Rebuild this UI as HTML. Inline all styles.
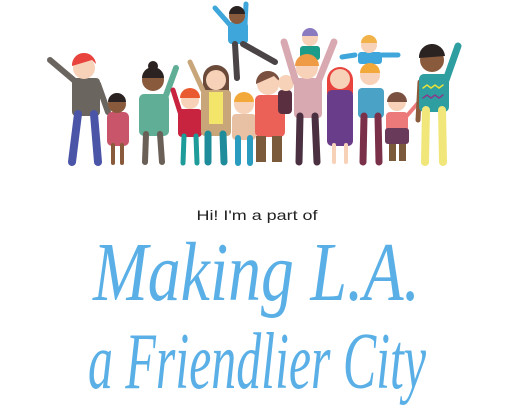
<!DOCTYPE html>
<html><head><meta charset="utf-8"><style>
html,body{margin:0;padding:0;background:#fff;width:512px;height:410px;overflow:hidden}
svg{display:block}
</style></head><body>
<svg width="512" height="410" viewBox="0 0 512 410" xmlns="http://www.w3.org/2000/svg">
<g stroke-linecap="round">
<line x1="230" y1="25" x2="215" y2="8" stroke="#3ea6db" stroke-width="5"/>
<line x1="245" y1="25" x2="246" y2="4" stroke="#3ea6db" stroke-width="5"/>
<rect x="228" y="22" width="20" height="22" rx="4" fill="#3ea6db"/>
<line x1="235" y1="44" x2="237" y2="78" stroke="#4a4446" stroke-width="6"/>
<line x1="243" y1="44" x2="275" y2="62" stroke="#4a4446" stroke-width="6"/>
<circle cx="237" cy="16" r="8" fill="#8a5a3c"/><path d="M229 14a8 8 0 0 1 16 0z" fill="#2b2222"/>
<line x1="76" y1="82" x2="50" y2="60" stroke="#6b6560" stroke-width="6"/>
<line x1="98" y1="84" x2="108" y2="112" stroke="#6b6560" stroke-width="6"/>
<rect x="72" y="78" width="28" height="38" rx="4" fill="#6b6560"/>
<line x1="78" y1="114" x2="72" y2="162" stroke="#4a55a8" stroke-width="8"/>
<line x1="94" y1="114" x2="98" y2="162" stroke="#4a55a8" stroke-width="8"/>
<circle cx="84" cy="68" r="11" fill="#f7d2b8"/><path d="M72 66a12 12 0 0 1 24 -2l-4 -4z" fill="#e8433c"/>
<rect x="107" y="112" width="22" height="34" rx="5" fill="#c9556a"/>
<line x1="113" y1="145" x2="113" y2="163" stroke="#8a5a3c" stroke-width="4"/>
<line x1="122" y1="145" x2="122" y2="163" stroke="#8a5a3c" stroke-width="4"/>
<circle cx="117" cy="104" r="9" fill="#8a5a3c"/><path d="M108 102a9 9 0 0 1 18 0z" fill="#2b2222"/>
<line x1="165" y1="98" x2="176" y2="68" stroke="#5fae95" stroke-width="6"/>
<rect x="139" y="94" width="30" height="42" rx="5" fill="#5fae95"/>
<line x1="146" y1="134" x2="145" y2="162" stroke="#6b6058" stroke-width="6"/>
<line x1="160" y1="134" x2="162" y2="162" stroke="#6b6058" stroke-width="6"/>
<circle cx="153" cy="80" r="11" fill="#8a5a3c"/><path d="M142 78a11 11 0 0 1 22 0z" fill="#2b2222"/><circle cx="153" cy="66" r="5" fill="#2b2222"/>
<line x1="180" y1="112" x2="173" y2="90" stroke="#c8233f" stroke-width="5"/>
<rect x="178" y="109" width="24" height="28" rx="4" fill="#c8233f"/>
<line x1="184" y1="136" x2="183" y2="163" stroke="#1e9c9a" stroke-width="5"/>
<line x1="196" y1="136" x2="197" y2="163" stroke="#1e9c9a" stroke-width="5"/>
<circle cx="190" cy="100" r="9" fill="#f7d2b8"/><path d="M180 98a10 10 0 0 1 20 0z" fill="#ea5a30"/>
<path d="M203 78a13 13 0 0 1 26 0v30h-26z" fill="#6b4a3a"/>
<line x1="205" y1="95" x2="190" y2="62" stroke="#c9a67a" stroke-width="5"/>
<rect x="201" y="90" width="30" height="46" rx="4" fill="#c9a67a"/>
<rect x="209" y="92" width="14" height="32" fill="#f2e56a"/>
<line x1="208" y1="134" x2="208" y2="162" stroke="#1e8c9a" stroke-width="7"/>
<line x1="223" y1="134" x2="224" y2="162" stroke="#1e8c9a" stroke-width="7"/>
<circle cx="216" cy="80" r="10" fill="#f7d2b8"/>
<rect x="232" y="114" width="24" height="26" rx="4" fill="#e8c0a4"/>
<line x1="238" y1="138" x2="238" y2="163" stroke="#2a9cc0" stroke-width="6"/>
<line x1="250" y1="138" x2="250" y2="163" stroke="#2a9cc0" stroke-width="6"/>
<circle cx="244" cy="104" r="10" fill="#f7d2b8"/><path d="M234 102a10 10 0 0 1 20 0z" fill="#f2a93a"/>
<rect x="255" y="95" width="30" height="42" rx="5" fill="#ec6157"/>
<rect x="256" y="136" width="10" height="26" fill="#7a5a3a"/><rect x="272" y="136" width="10" height="26" fill="#7a5a3a"/>
<circle cx="268" cy="84" r="11" fill="#f7d2b8"/><path d="M256 84a12 12 0 0 1 24 -2l-6 -6z" fill="#7a5040"/>
<rect x="278" y="90" width="14" height="24" rx="4" fill="#5a3040"/>
<circle cx="286" cy="83" r="8" fill="#f7d2b8"/>
<line x1="296" y1="82" x2="284" y2="42" stroke="#d9a9b2" stroke-width="7"/>
<line x1="318" y1="82" x2="334" y2="42" stroke="#d9a9b2" stroke-width="7"/>
<rect x="294" y="78" width="28" height="40" rx="4" fill="#d9a9b2"/>
<line x1="300" y1="116" x2="299" y2="162" stroke="#4a3040" stroke-width="7"/>
<line x1="315" y1="116" x2="317" y2="162" stroke="#4a3040" stroke-width="7"/>
<rect x="300" y="46" width="20" height="14" rx="3" fill="#1e9c8a"/>
<circle cx="307" cy="68" r="11" fill="#f7d2b8"/><path d="M295 66a12 12 0 0 1 24 0z" fill="#ef9a45"/>
<circle cx="310" cy="38" r="8" fill="#f7d2b8"/><path d="M302 36a8 8 0 0 1 16 0z" fill="#8a7ac0"/>
<path d="M327 80a13 13 0 0 1 26 0v14h-26z" fill="#e8433c"/>
<rect x="327" y="90" width="26" height="56" rx="5" fill="#6a3d8a"/>
<line x1="334" y1="145" x2="334" y2="162" stroke="#f7d2b8" stroke-width="4"/>
<line x1="346" y1="145" x2="346" y2="162" stroke="#f7d2b8" stroke-width="4"/>
<circle cx="340" cy="79" r="10" fill="#f7d2b8"/>
<line x1="355" y1="55" x2="342" y2="57" stroke="#3ea6db" stroke-width="5"/>
<line x1="382" y1="55" x2="398" y2="55" stroke="#3ea6db" stroke-width="5"/>
<rect x="358" y="52" width="24" height="12" rx="3" fill="#3ea6db"/>
<circle cx="369" cy="45" r="8" fill="#f7d2b8"/><path d="M361 43a8 8 0 0 1 16 0z" fill="#f2b24a"/>
<rect x="358" y="88" width="26" height="30" rx="4" fill="#4aa3c6"/>
<line x1="364" y1="116" x2="363" y2="162" stroke="#7a3048" stroke-width="7"/>
<line x1="378" y1="116" x2="379" y2="162" stroke="#7a3048" stroke-width="7"/>
<circle cx="370" cy="75" r="10" fill="#f7d2b8"/><path d="M360 73a10 10 0 0 1 20 0z" fill="#f2a93a"/>
<line x1="405" y1="118" x2="424" y2="96" stroke="#ec7a7a" stroke-width="4"/>
<rect x="386" y="112" width="22" height="20" rx="4" fill="#ec7a7a"/>
<rect x="385" y="128" width="24" height="16" rx="3" fill="#6a3a5a"/>
<rect x="389" y="144" width="7" height="17" fill="#7a5a3a"/><rect x="399" y="144" width="7" height="17" fill="#7a5a3a"/>
<circle cx="397" cy="102" r="9" fill="#f7d2b8"/><path d="M387 102a10 10 0 0 1 20 0z" fill="#7a5040"/>
<line x1="446" y1="80" x2="458" y2="46" stroke="#2e9ea0" stroke-width="7"/>
<line x1="420" y1="82" x2="418" y2="120" stroke="#8a5a3c" stroke-width="5"/>
<rect x="419" y="74" width="30" height="38" rx="5" fill="#2e9ea0"/>
<path d="M423 88l4 -3 4 3 4 -3 4 3 4 -3" stroke="#e8e23a" stroke-width="1.5" fill="none"/>
<path d="M423 98l4 -3 4 3 4 -3 4 3 4 -3" stroke="#8a3a8a" stroke-width="1.5" fill="none"/>
<line x1="426" y1="110" x2="425" y2="162" stroke="#f1e67a" stroke-width="8"/>
<line x1="442" y1="110" x2="443" y2="162" stroke="#f1e67a" stroke-width="8"/>
<circle cx="432" cy="60" r="12" fill="#8a5a3c"/><path d="M419 58a13 13 0 0 1 26 -2z" fill="#2b2222"/>
</g>
<text x="257" y="220" text-anchor="middle" font-family="Liberation Sans, sans-serif" font-size="14" fill="#222" textLength="121" lengthAdjust="spacingAndGlyphs">Hi! I'm a part of</text>
<text x="93" y="300" textLength="327" lengthAdjust="spacingAndGlyphs" font-family="Liberation Serif, serif" font-style="italic" font-size="84" fill="#5ab0e6">Making L.A.</text>
<text x="88" y="388" textLength="338" lengthAdjust="spacingAndGlyphs" font-family="Liberation Serif, serif" font-style="italic" font-size="80" fill="#5ab0e6">a Friendlier City</text>
</svg>
</body></html>
